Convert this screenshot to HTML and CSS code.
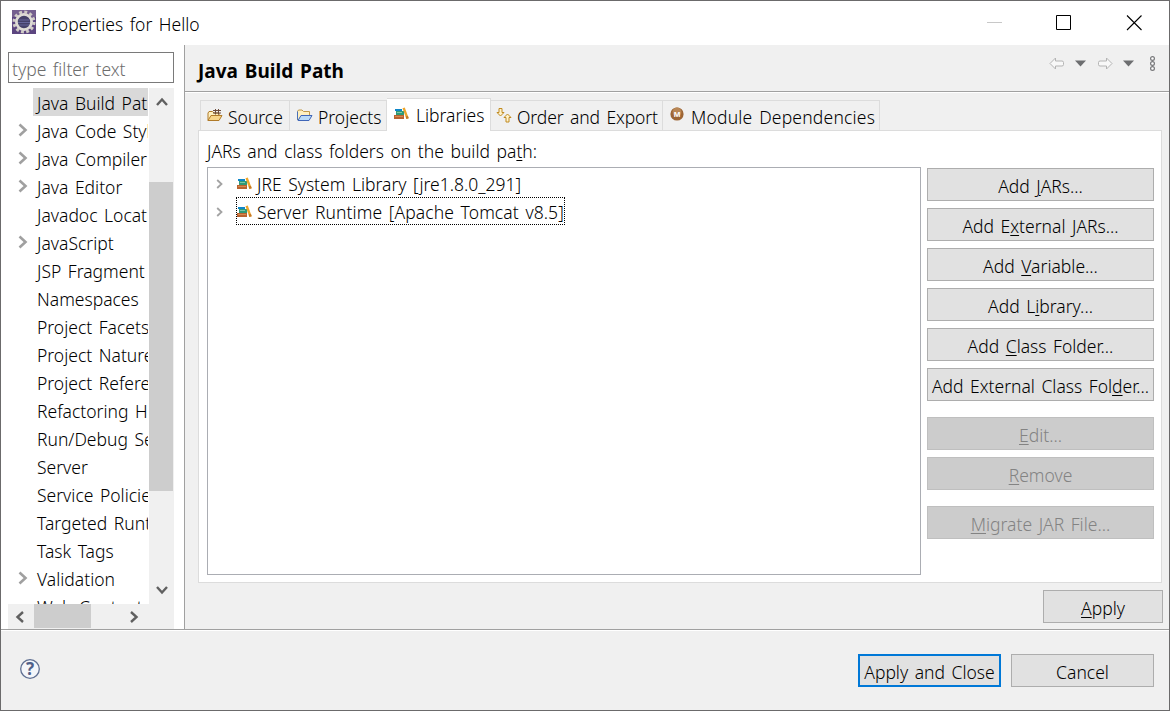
FILE: index.html
```html
<!DOCTYPE html>
<html lang="en">
<head>
  <meta charset="UTF-8" />
  <title>Properties for Hello</title>
  <link rel="stylesheet" href="styles.css">
</head>
<body>
  <!-- shared icons -->
  <svg class="defs" width="0" height="0">
    <symbol id="books" viewBox="0 0 16 14">
      <path d="M1 2h7v2H1z" fill="#0f86c8"/>
      <path d="M2 4h8v4H2z" fill="#2f9a78"/>
      <path d="M3 5.500h5" stroke="#7fc8a8"/>
      <path d="M0 8h10v4H0z" fill="#b9622f"/>
      <path d="M1 9.500h8" stroke="#d98a50"/>
      <path d="M8.500 1.200l2.300-.8 3.900 10.800-2.300.8z" fill="#eda62c"/>
      <path d="M11.700 9.600l2.200-.8.800 2.400-2.300.8z" fill="#c67a28"/>
    </symbol>
    <symbol id="expand" viewBox="0 0 10 14">
      <path d="M1.500 1.500L7.500 7l-6 5.500" fill="none" stroke="#a0a0a0" stroke-width="2.600"/>
    </symbol>
    <symbol id="expand-small" viewBox="0 0 8 10">
      <path d="M1.200 1L5.500 5l-4.300 4" fill="none" stroke="#a3a3a3" stroke-width="1.800"/>
    </symbol>
  </svg>

  <div class="window">
    <div class="titlebar">
      <svg class="app-icon" width="24" height="24" viewBox="0 0 24 24">
        <rect width="24" height="24" fill="#5c4580"/>
        <path d="M0 0h24v7H0z" fill="#75608f"/>
        <circle cx="12" cy="12" r="10" fill="none" stroke="#d0ccc6" stroke-width="3" stroke-dasharray="2.900 2.336"/>
        <circle cx="12" cy="12" r="7.600" fill="#454169" stroke="#dedbd5" stroke-width="2.800"/>
        <path d="M6.500 10h11M6 12.500h12M7 15h10" stroke="#66669a"/>
      </svg>
      <span class="title">Properties for Hello</span>
      <div class="window-controls">
        <svg width="16" height="16"><path d="M1 7.500h15" stroke="#c8c8c8"/></svg>
        <svg width="16" height="16"><path d="M.5.5h14v14H.5z" fill="none" stroke="#000"/></svg>
        <svg width="16" height="16"><path d="M1 .5l14.500 14.500M15.500 .5L1 15" stroke="#000" stroke-width="1.100"/></svg>
      </div>
    </div>

    <div class="main">
      <div class="sidebar">
        <input class="filter" type="text" placeholder="type filter text">
        <div class="tree-area">
          <ul class="tree">
            <li class="selected"><span>Java Build Path</span></li>
            <li><svg><use href="#expand"/></svg><span>Java Code Style</span></li>
            <li><svg><use href="#expand"/></svg><span>Java Compiler</span></li>
            <li><svg><use href="#expand"/></svg><span>Java Editor</span></li>
            <li><span>Javadoc Location</span></li>
            <li><svg><use href="#expand"/></svg><span>JavaScript</span></li>
            <li><span>JSP Fragment</span></li>
            <li><span>Namespaces</span></li>
            <li><span>Project Facets</span></li>
            <li><span>Project Natures</span></li>
            <li><span>Project References</span></li>
            <li><span>Refactoring History</span></li>
            <li><span>Run/Debug Settings</span></li>
            <li><span>Server</span></li>
            <li><span>Service Policies</span></li>
            <li><span>Targeted Runtimes</span></li>
            <li><span>Task Tags</span></li>
            <li><svg><use href="#expand"/></svg><span>Validation</span></li>
            <li><span>Web Content Settings</span></li>
          </ul>
          <div class="scroll-v">
            <svg width="12" height="10" viewBox="0 0 12 10"><path d="M1 8l5-5.500L11 8" fill="none" stroke="#606060" stroke-width="2.400"/></svg>
            <div class="thumb-v"></div>
            <svg width="12" height="10" viewBox="0 0 12 10"><path d="M1 2l5 5.500L11 2" fill="none" stroke="#606060" stroke-width="2.400"/></svg>
          </div>
        </div>
        <div class="scroll-h">
          <svg width="10" height="12" viewBox="0 0 10 12"><path d="M8 1L2.500 6 8 11" fill="none" stroke="#606060" stroke-width="2.400"/></svg>
          <div class="thumb-h"></div>
          <svg width="10" height="12" viewBox="0 0 10 12"><path d="M2 1l5.500 5L2 11" fill="none" stroke="#606060" stroke-width="2.400"/></svg>
        </div>
      </div>

      <div class="content">
        <div class="page-header">
          <h1>Java Build Path</h1>
          <svg class="nav-tools" width="108" height="18" viewBox="0 0 108 18">
            <path d="M1 8.500l5.500-5.500v3H13q1.500 0 1.500 1.500v2q0 1.500-1.500 1.500H6.500v3z" fill="#f8f8f8" stroke="#b4b4b4"/>
            <path d="M26 5.500h11l-5.500 6z" fill="#6d6e70"/>
            <path d="M63 8.500l-5.500-5.500v3H51q-1.500 0-1.500 1.500v2q0 1.500 1.500 1.500h6.500v3z" fill="#f8f8f8" stroke="#b4b4b4"/>
            <path d="M74 5.500h11l-5.500 6z" fill="#6d6e70"/>
            <g fill="#fff" stroke="#77787a" stroke-width="1.200"><circle cx="103.500" cy="3.500" r="1.900"/><circle cx="103.500" cy="8.500" r="1.900"/><circle cx="103.500" cy="13.500" r="1.900"/></g>
          </svg>
        </div>

        <div class="tabs">
          <div class="tab tab-source">
            <svg width="16" height="14" viewBox="0 0 16 14">
              <path d="M1 11.500V4l1-1.500h3.500L7 4h5v2" fill="#fff0c0" stroke="#b07a28"/>
              <path d="M1 11.500L4 6.500h11L12 11.500z" fill="#f8d58a" stroke="#b07a28"/>
              <path d="M8.500 0v5.500M11.500 0v5.500M6 1.500h8M6 4h8" stroke="#6d4c3c"/>
            </svg>
            <span>Source</span>
          </div>
          <div class="tab tab-projects">
            <svg width="17" height="14" viewBox="0 0 17 14">
              <path d="M1.500 11V2.500L2.500 1h3.500L7.500 2.500h6V6" fill="#fff0c0" stroke="#c09848"/>
              <path d="M2 11.500L5 6.500h11L13 11.500z" fill="#b9daf8" stroke="#3f66b8"/>
              <path d="M1.500 2.500V10l1 1.500" fill="none" stroke="#4a70b8"/>
            </svg>
            <span>Projects</span>
          </div>
          <div class="tab tab-libraries active">
            <svg width="16" height="14"><use href="#books"/></svg>
            <span>Libraries</span>
          </div>
          <div class="tab tab-order">
            <svg width="16" height="16" viewBox="0 0 16 16">
              <path d="M3 .5h3v4h2L4.500 8 1 4.500h2z" fill="#fff3cc" stroke="#c08a20"/>
              <path d="M10 14h3V9.500h2L11.500 6 8 9.500h2z" fill="#fff3cc" stroke="#c08a20"/>
            </svg>
            <span>Order and Export</span>
          </div>
          <div class="tab tab-module">
            <svg width="14" height="14" viewBox="0 0 14 14">
              <circle cx="7" cy="7" r="6.600" fill="#9c6535"/>
              <circle cx="7" cy="5" r="4.500" fill="#b88655"/>
              <text x="7" y="10" text-anchor="middle" class="badge-letter">M</text>
            </svg>
            <span>Module Dependencies</span>
          </div>
        </div>

        <div class="panel">
          <div class="panel-label">JARs and class folders on the build pa<u>t</u>h:</div>
          <div class="panel-body">
            <ul class="jar-list">
              <li><svg class="arrow"><use href="#expand-small"/></svg><div class="entry"><svg class="books"><use href="#books"/></svg><span>JRE System Library [jre1.8.0_291]</span></div></li>
              <li><svg class="arrow"><use href="#expand-small"/></svg><div class="entry focused"><svg class="books"><use href="#books"/></svg><span>Server Runtime [Apache Tomcat v8.5]</span></div></li>
            </ul>
            <div class="actions">
              <button>Add <u>J</u>ARs...</button>
              <button>Add E<u>x</u>ternal JARs...</button>
              <button>Add <u>V</u>ariable...</button>
              <button>Add L<u>i</u>brary...</button>
              <button>Add <u>C</u>lass Folder...</button>
              <button>Add External Class Fol<u>d</u>er...</button>
              <button class="spaced" disabled><u>E</u>dit...</button>
              <button disabled><u>R</u>emove</button>
              <button class="spaced" disabled><u>M</u>igrate JAR File...</button>
            </div>
          </div>
        </div>

        <button class="apply"><u>A</u>pply</button>
      </div>
    </div>

    <div class="footer">
      <svg class="help" width="22" height="22" viewBox="0 0 22 22">
        <circle cx="11" cy="11" r="9.300" fill="#f4f6fa" stroke="#5f6f92" stroke-width="1.300"/>
        <text x="11" y="17" text-anchor="middle" class="help-mark">?</text>
      </svg>
      <button class="primary">Apply and Close</button>
      <button>Cancel</button>
    </div>
  </div>
</body>
</html>
```
FILE: styles.css
```css
* {
  box-sizing: border-box;
  margin: 0;
  padding: 0;
}

body {
  font-family: "Noto Sans", "Open Sans", sans-serif;
  font-size: 17.5px;
  font-weight: 360;
  word-spacing: 2px;
  color: #000;
  overflow: hidden;
}

ul {
  list-style: none;
}

u {
  text-underline-offset: 2px;
  text-decoration-thickness: 1px;
}

svg {
  display: block;
  flex: none;
}

.defs {
  position: absolute;
}

.window {
  display: flex;
  flex-direction: column;
  width: 1170px;
  height: 711px;
  background: #f0f0f0;
  border: 1px solid #6b6a6b;
}

/* title bar */
.titlebar {
  display: flex;
  align-items: center;
  height: 44px;
  padding: 0 27px 0 11px;
  background: #fff;
}

.app-icon {
  margin-top: -2px;
}

.title {
  margin-left: 5px;
  padding-top: 1px;
}

.window-controls {
  display: flex;
  gap: 54px;
  margin-left: auto;
}

.main {
  display: flex;
  height: 584px;
}

/* left side */
.sidebar {
  width: 184px;
  padding: 7px 10px 0 7px;
  background: #fff;
  border-right: 1px solid #a0a0a0;
}

.filter {
  display: block;
  width: 166px;
  height: 31px;
  padding: 3px 4px 0 3px;
  border: 1px solid #7a7a7a;
  font: inherit;
  word-spacing: inherit;
}

.filter::placeholder {
  color: #6d6d6d;
}

.tree-area {
  display: flex;
  height: 516px;
  margin-top: 5px;
}

.tree {
  width: 141px;
  overflow: hidden;
}

.tree li {
  display: flex;
  justify-content: flex-end;
  align-items: center;
  width: 140px;
  height: 28px;
}

.tree li svg {
  width: 10px;
  height: 14px;
  margin-right: 5px;
}

.tree li span {
  width: 115px;
  height: 28px;
  padding: 3px 0 0 4px;
  line-height: 25px;
  white-space: nowrap;
  overflow: hidden;
}

.tree li.selected span {
  background: #d9d9d9;
}

.scroll-v {
  display: flex;
  flex-direction: column;
  align-items: center;
  width: 25px;
  padding: 9px 0;
  background: #f0f0f0;
}

.thumb-v {
  width: 24px;
  height: 309px;
  margin: 75px 1px auto 0;
  background: #cdcdcd;
}

.scroll-h {
  display: flex;
  align-items: center;
  width: 166px;
  height: 25px;
  padding-left: 7px;
  background: #f0f0f0;
}

.thumb-h {
  width: 57px;
  height: 24px;
  margin: 0 38px 1px 9px;
  background: #cdcdcd;
}

/* right side */
.content {
  display: flex;
  flex-direction: column;
  width: 984px;
  padding: 0 6px 0 13px;
}

.page-header {
  display: flex;
  justify-content: space-between;
  height: 48px;
  margin: 0 -6px 0 -13px;
  padding: 10px 12px 0 13px;
  border-bottom: 1px solid #fff;
  box-shadow: inset 0 -1px #a0a0a0;
}

.page-header h1 {
  padding-top: 3px;
  font-size: 19px;
  line-height: 26px;
}

.tabs {
  display: flex;
  align-items: flex-end;
  height: 37px;
  padding-left: 2px;
}

.tab {
  display: flex;
  height: 30px;
  padding-top: 4px;
  line-height: 24px;
  white-space: nowrap;
  border: 1px solid #dcdcdc;
  border-bottom: none;
  border-left: none;
}

.tab svg {
  margin: 4px 5px 0 6px;
}

.tab-source {
  width: 90px;
  border-left: 1px solid #dcdcdc;
}

.tab-projects {
  width: 97px;
}

.tab.active {
  z-index: 1;
  width: 104px;
  height: 33px;
  margin-bottom: -1px;
  background: #fff;
}

.tab.active svg {
  margin: 4px 6px 0 7px;
}

.tab-order {
  width: 172px;
  letter-spacing: -0.1px;
}

.tab-order svg {
  margin: 3px 5px 0 5px;
}

.tab-module {
  width: 217px;
  letter-spacing: 0.2px;
}

.tab-module svg {
  margin: 2px 7px 0 7px;
}

.badge-letter {
  font: bold 8px "Liberation Sans", sans-serif;
  letter-spacing: 0;
  fill: #fff;
}

.panel {
  width: 964px;
  height: 453px;
  padding: 7px 7px 0 8px;
  background: #fff;
  border: 1px solid #dcdcdc;
}

.panel-label {
  height: 29px;
  line-height: 26px;
}

.panel-body {
  display: flex;
  gap: 6px;
}

.jar-list {
  width: 714px;
  height: 408px;
  padding-top: 1px;
  border: 1px solid #abadb3;
}

.jar-list li {
  display: flex;
  height: 28px;
  padding-left: 8px;
}

.arrow {
  width: 8px;
  height: 10px;
  margin: 10px 12px 0 0;
}

.entry {
  display: flex;
  height: 28px;
  padding-top: 1px;
  line-height: 26px;
  border: 1px solid transparent;
}

.entry.focused {
  border: 1px dotted #000;
  letter-spacing: 0.08px;
}

.books {
  width: 16px;
  height: 14px;
  margin: 6px 4px 0 0;
}

.actions {
  display: flex;
  flex-direction: column;
  gap: 7px;
  padding-top: 1px;
}

button {
  height: 33px;
  padding-top: 3px;
  border: 1px solid #adadad;
  background: #e1e1e1;
  color: #000;
  font: inherit;
  line-height: 24px;
  word-spacing: inherit;
  white-space: nowrap;
}

button:disabled {
  background: #ccc;
  border-color: #bfbfbf;
  color: #838383;
}

.actions button {
  width: 227px;
}

.actions .spaced {
  margin-top: 9px;
}

.apply {
  width: 120px;
  margin: 7px 0 0 auto;
}

.footer {
  display: flex;
  height: 81px;
  padding: 24px 15px 0 18px;
  gap: 10px;
  border-top: 1px solid #a0a0a0;
  box-shadow: inset 0 1px #fff;
}

.help {
  margin: 4px auto 0 0;
}

.help-mark {
  font: bold 17px "Noto Sans", sans-serif;
  fill: #4f6088;
}

.footer button {
  width: 143px;
}

.footer .primary {
  border: 2px solid #0078d7;
}
```
